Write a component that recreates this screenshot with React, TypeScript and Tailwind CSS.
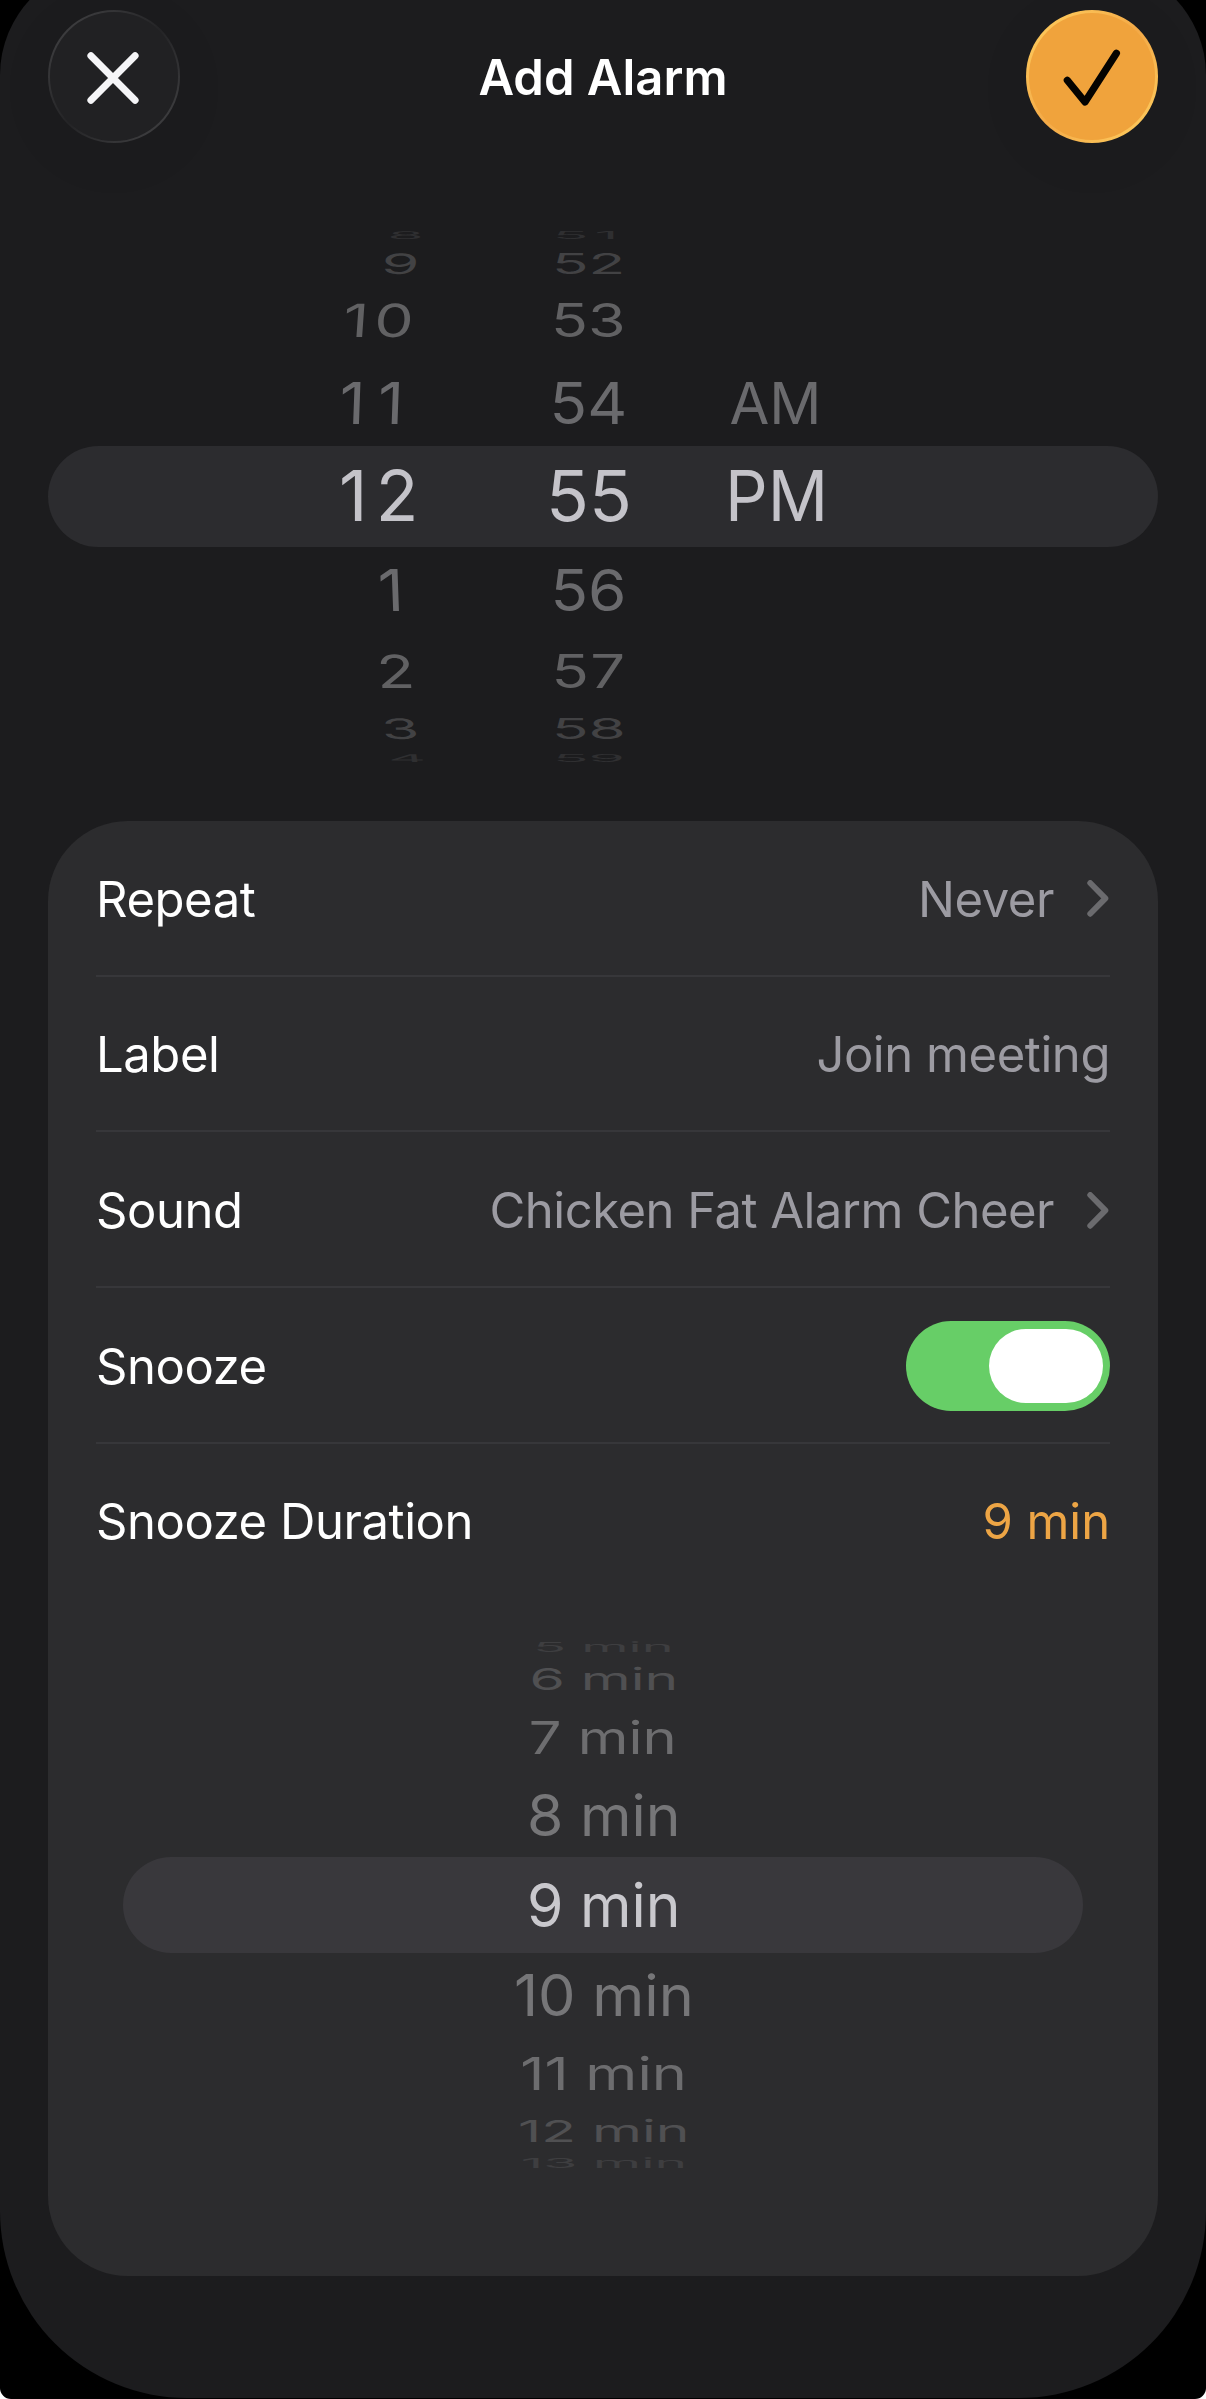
import React, { useState } from 'react';

interface WheelItem {
  text: string;
  x?: number;
  sx?: number;
  tracking?: number;
}

interface WheelProps {
  items: WheelItem[];
  tilt?: number;
  rows: string[];
  scaleY: number[];
  align?: string;
  className?: string;
}

// Nine visible rows, the selected one is in the middle
const TIME_ROWS = [
  'h-[19.2px] text-[#2f2f31]',
  'h-[38.2px] text-[#424244]',
  'h-[76.8px] text-[#616163]',
  'h-[86.4px] text-[#6a6a6d]',
  'h-[101px] text-[#c4c3c9]',
  'h-[86.4px] text-[#6a6a6d]',
  'h-[76.8px] text-[#616163]',
  'h-[38.2px] text-[#424244]',
  'h-[19.2px] text-[#2f2f31]',
];
const TIME_SCALE = [0.15, 0.4, 0.655, 0.825, 1, 0.825, 0.655, 0.4, 0.15];

const SNOOZE_ROWS = [
  'h-[20px] text-[#3e3e40]',
  'h-[44px] text-[#505052]',
  'h-[72px] text-[#6d6d6f]',
  'h-[84px] text-[#767678]',
  'h-[96px] text-[#c9c8cd]',
  'h-[84px] text-[#767678]',
  'h-[72px] text-[#6d6d6f]',
  'h-[44px] text-[#505052]',
  'h-[20px] text-[#3e3e40]',
];
const SNOOZE_SCALE = [0.22, 0.5, 0.75, 0.95, 1, 0.95, 0.75, 0.5, 0.22];

const HOURS: WheelItem[] = [
  { text: '8', x: 45.5, sx: 0.84 },
  { text: '9', x: 39.5, sx: 0.87 },
  { text: '10', x: 1.5, sx: 0.89, tracking: 0.09 },
  { text: '11', x: -2.5, sx: 0.905, tracking: 0.2 },
  { text: '12', x: -3, sx: 1, tracking: 0.12 },
  { text: '1', x: 36, sx: 0.905 },
  { text: '2', x: 34.5, sx: 0.89 },
  { text: '3', x: 39.5, sx: 0.87 },
  { text: '4', x: 46, sx: 0.84 },
];

const MINUTES: WheelItem[] = [
  { text: '51', sx: 0.84, tracking: 0.1 },
  { text: '52', sx: 0.86 },
  { text: '53', x: -0.5, sx: 0.87 },
  { text: '54', x: -0.5, sx: 0.885 },
  { text: '55', x: 0.5, sx: 1.01 },
  { text: '56', x: -0.5, sx: 0.885 },
  { text: '57', x: 0.5, sx: 0.88, tracking: 0.02 },
  { text: '58', sx: 0.86 },
  { text: '59', sx: 0.84 },
];

const PERIODS: WheelItem[] = [
  { text: '' },
  { text: '' },
  { text: '' },
  { text: 'AM', x: -0.5, sx: 0.825 },
  { text: 'PM', x: -5, sx: 0.955 },
  { text: '' },
  { text: '' },
  { text: '' },
  { text: '' },
];

const SNOOZE_TIMES: WheelItem[] = [
  { text: '5 min', x: 0.5, sx: 0.9 },
  { text: '6 min', x: 0.5, sx: 0.95 },
  { text: '7 min', sx: 0.965 },
  { text: '8 min', x: 0.5, sx: 0.98 },
  { text: '9 min', x: 0.5, sx: 0.98 },
  { text: '10 min', x: 1, sx: 0.99 },
  { text: '11 min', x: 0.5, sx: 0.99 },
  { text: '12 min', x: 0.5, sx: 0.95 },
  { text: '13 min', x: 0.5, sx: 0.92 },
];

const Wheel = ({ items, rows, scaleY, tilt = 0, align = 'justify-center', className = '' }: WheelProps) => (
  <div className={`flex flex-col ${className}`}>
    {items.map((item, i) => (
      <div key={i} className={`flex items-center ${align} ${rows[i]}`}>
        <span
          className={`leading-none whitespace-nowrap ${align === 'justify-start' ? 'origin-left' : 'origin-center'}`}
          style={{
            letterSpacing: `${item.tracking ?? 0}em`,
            transform: `translateX(${item.x ?? 0}px) skewX(${(i - 4) * tilt}deg) scale(${item.sx ?? 1}, ${scaleY[i]})`,
          }}
        >
          {item.text}
        </span>
      </div>
    ))}
  </div>
);

const Chevron = () => (
  <svg className="ml-[33px] mr-[1px] h-[38px] w-[22px]" viewBox="0 0 22 38" fill="none">
    <path d="M3.2 3 18.4 18.4 3.2 33.8" stroke="#6b6b6e" strokeWidth="5.8" strokeLinecap="round" strokeLinejoin="round" />
  </svg>
);

interface RowProps {
  label: string;
  last?: boolean;
  children: React.ReactNode;
}

const Row = ({ label, last, children }: RowProps) => (
  <div
    className={`flex items-center justify-between text-[49px] leading-none tracking-[-0.009em] ${
      last ? 'h-[155px]' : 'h-[155.7px] border-b-2 border-[#37373a] pt-[3px]'
    }`}
  >
    <span className="text-white">{label}</span>
    <div className="flex items-center text-[#9c9ba2]">{children}</div>
  </div>
);

export default function App() {
  const [snooze, setSnooze] = useState(true);

  return (
    <div className="h-[2399px] w-[1206px] bg-white font-['Inter',sans-serif]">
      <div className="h-full overflow-hidden rounded-b-[11px] bg-black">
        <div className="-mt-[35px] flex h-[2433px] flex-col rounded-t-[110px] rounded-b-[187px] bg-[#1c1c1e] px-12 pt-[45px]">
          {/* Header */}
          <div className="flex items-center justify-between">
            <button
              title="Cancel"
              className="h-[133px] w-[132px] rounded-full bg-linear-to-br from-[#464648] via-[#242426] to-[#464648] p-[2px] shadow-[0_12px_60px_rgba(0,0,0,0.06)]"
            >
              <span className="flex h-full w-full items-center justify-center rounded-full bg-[#212123]">
                <svg className="mt-[2px] -ml-[2px] h-[54px] w-[54px]" viewBox="0 0 54 54" fill="none">
                  <path d="M4.9 4.7 49.1 49.3M49.1 4.7 4.9 49.3" stroke="#f5f5f7" strokeWidth="7" strokeLinecap="round" />
                </svg>
              </span>
            </button>
            <h1 className="pt-[2px] text-[49px] font-semibold leading-none text-white">Add Alarm</h1>
            <button
              title="Save"
              className="h-[133px] w-[132px] rounded-full bg-linear-to-br from-[#ffd060] via-[#f3a947] to-[#ffd060] p-[3px] shadow-[0_12px_60px_rgba(0,0,0,0.06)]"
            >
              <span className="flex h-full w-full items-center justify-center rounded-full bg-[#f0a33c]">
                <svg className="mt-[3px] h-[58px] w-[58px]" viewBox="0 0 58 58" fill="none">
                  <path d="M4.3 31.2 22 53 53.4 4.3" stroke="#050300" strokeWidth="7.2" strokeLinecap="round" strokeLinejoin="round" />
                </svg>
              </span>
            </button>
          </div>

          {/* Time picker */}
          <div className="relative mt-[82.4px] flex text-[70px]">
            <div className="absolute inset-x-0 top-[220.6px] h-[101px] rounded-full bg-[#2c2c2f]" />
            <Wheel items={HOURS} rows={TIME_ROWS} scaleY={TIME_SCALE} tilt={2} align="justify-start" className="relative ml-[294px] w-[158px]" />
            <Wheel items={MINUTES} rows={TIME_ROWS} scaleY={TIME_SCALE} className="relative w-[177px]" />
            <Wheel items={PERIODS} rows={TIME_ROWS} scaleY={TIME_SCALE} align="justify-start" className="relative ml-[53px] w-[150px]" />
          </div>

          {/* Options */}
          <div className="mt-[53.4px] h-[1455px] rounded-[80px] bg-[#2c2c2e] px-12">
            <Row label="Repeat">
              Never
              <Chevron />
            </Row>
            <Row label="Label">Join meeting</Row>
            <Row label="Sound">
              <span className="tracking-[-0.0105em]">Chicken Fat Alarm Cheer</span>
              <Chevron />
            </Row>
            <Row label="Snooze">
              <button
                role="switch"
                aria-checked={snooze}
                onClick={() => setSnooze(!snooze)}
                className={`flex h-[90px] w-[204px] items-center rounded-full px-[7px] ${
                  snooze ? 'justify-end bg-[#67ce67]' : 'justify-start bg-[#49494c]'
                }`}
              >
                <span className="h-[74px] w-[114px] rounded-full bg-white" />
              </button>
            </Row>
            <Row label="Snooze Duration" last>
              <span className="tracking-[-0.002em] text-[#eda545]">9 min</span>
            </Row>

            <div className="relative mt-[38.7px] text-[60px]">
              <div className="absolute inset-x-[27px] top-[220px] h-[96px] rounded-full bg-[#39383c]" />
              <Wheel items={SNOOZE_TIMES} rows={SNOOZE_ROWS} scaleY={SNOOZE_SCALE} className="relative" />
            </div>
          </div>
        </div>
      </div>
    </div>
  );
}
